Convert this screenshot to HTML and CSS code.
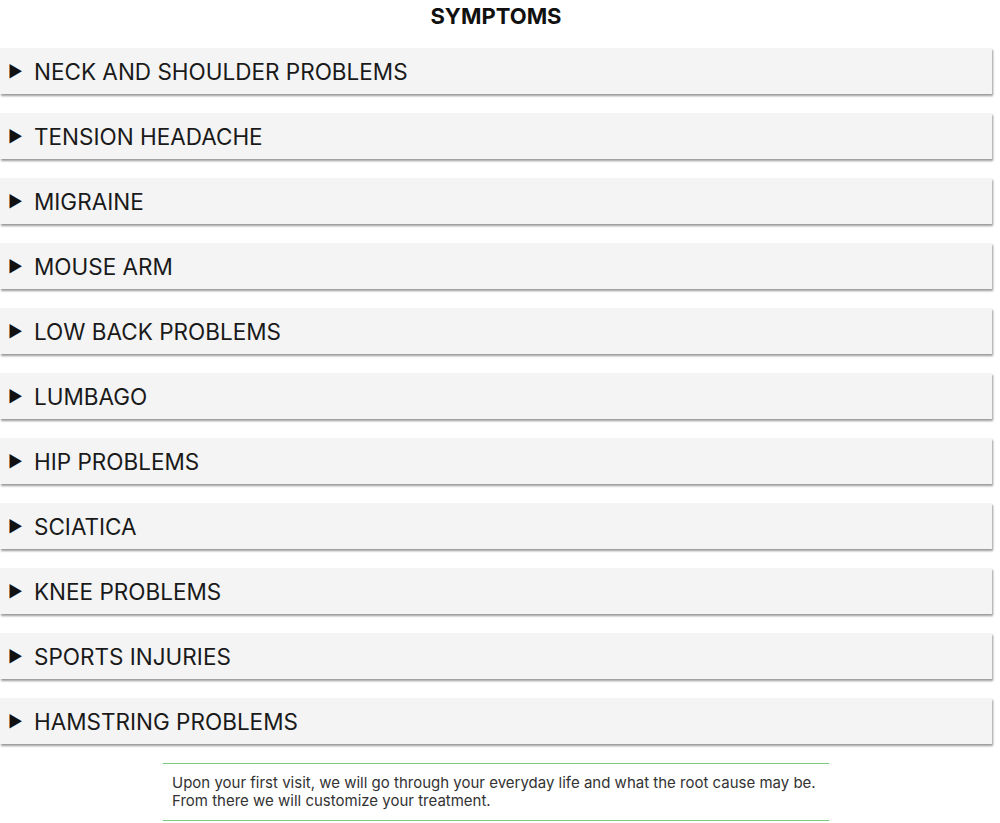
FILE: index.html
```html
<!DOCTYPE html>
<html>
<head>
<meta charset="utf-8">
<link rel="stylesheet" href="styles.css">
</head>
<body>
<div class="page">
  <h2 class="title">SYMPTOMS</h2>
  <div class="list">
    <details class="item"><summary><span class="tri">&#9654;</span>NECK AND SHOULDER PROBLEMS</summary></details>
    <details class="item"><summary><span class="tri">&#9654;</span>TENSION HEADACHE</summary></details>
    <details class="item"><summary><span class="tri">&#9654;</span>MIGRAINE</summary></details>
    <details class="item"><summary><span class="tri">&#9654;</span>MOUSE ARM</summary></details>
    <details class="item"><summary><span class="tri">&#9654;</span>LOW BACK PROBLEMS</summary></details>
    <details class="item"><summary><span class="tri">&#9654;</span>LUMBAGO</summary></details>
    <details class="item"><summary><span class="tri">&#9654;</span>HIP PROBLEMS</summary></details>
    <details class="item"><summary><span class="tri">&#9654;</span>SCIATICA</summary></details>
    <details class="item"><summary><span class="tri">&#9654;</span>KNEE PROBLEMS</summary></details>
    <details class="item"><summary><span class="tri">&#9654;</span>SPORTS INJURIES</summary></details>
    <details class="item"><summary><span class="tri">&#9654;</span>HAMSTRING PROBLEMS</summary></details>
  </div>
  <div class="note">
    <p>Upon your first visit, we will go through your everyday life and what the root cause may be.<br>From there we will customize your treatment.</p>
  </div>
</div>
</body>
</html>
```

FILE: styles.css
```css
* { box-sizing: border-box; }
html, body { margin: 0; padding: 0; background: #fff; }
body { font-family: Inter, "Liberation Sans", sans-serif; color: #111; }
.page { width: 992px; display: flex; flex-direction: column; align-items: center; }
.title {
  margin: 0;
  padding-top: 4px;
  height: 48px;
  font-size: 22px;
  font-weight: 700;
  line-height: 24px;
  color: #111;
}
.list { width: 100%; display: flex; flex-direction: column; gap: 19px; }
.item {
  background: #f4f4f4;
  box-shadow: 1px 2px 2px rgba(0,0,0,0.4);
  height: 46px;
}
.item summary {
  list-style: none;
  display: flex;
  align-items: center;
  height: 46px;
  padding-left: 8px;
  font-size: 22.5px;
  font-weight: 400;
  color: #1a1a1a;
  cursor: pointer;
}
.item summary::-webkit-details-marker { display: none; }
.tri { font-size: 16px; width: 26px; color: #111; }
.note {
  margin-top: 19px;
  width: 666px;
  border-top: 1px solid #7cc97c;
  border-bottom: 1px solid #7cc97c;
  padding: 10px 9px;
}
.note p { margin: 0; font-size: 15px; line-height: 18px; color: #333; }
```
